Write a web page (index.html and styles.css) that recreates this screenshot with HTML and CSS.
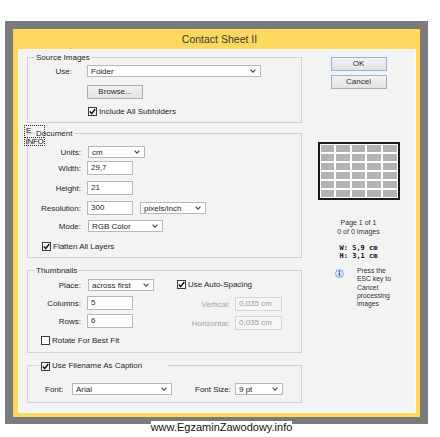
FILE: index.html
```html
<!DOCTYPE html>
<html>
<head>
<meta charset="utf-8">
<link rel="stylesheet" href="styles.css">
</head>
<body>
<div class="frame">
  <div class="dialog">
    <div class="titlebar">Contact Sheet II</div>
    <div class="panel">
      <div class="left">
        <section class="group g-source">
          <div class="ghead"><span class="gtitle">Source Images</span></div>
          <div class="gbody">
            <div class="row src-use">
              <span class="lbl lbl-src">Use:</span>
              <div class="select sel-folder"><span>Folder</span><svg class="chev" width="6" height="4" viewBox="0 0 6 4"><polyline points="0.6,0.6 3,3.2 5.4,0.6" fill="none" stroke="#444" stroke-width="1.1"/></svg></div>
            </div>
            <div class="row src-browse">
              <div class="btn btn-browse">Browse...</div>
            </div>
            <div class="row src-inc">
              <span class="cb cb-inc"><svg width="7" height="7" viewBox="0 0 7 7"><polyline points="0.8,3.6 2.7,5.6 6.3,1" fill="none" stroke="#111" stroke-width="1.5"/></svg></span>
              <span>Include All Subfolders</span>
            </div>
          </div>
        </section>

        <section class="group g-doc">
          <div class="ghead"><span class="gtitle">Document</span></div>
          <div class="gbody">
            <div class="row doc-units">
              <span class="lbl lbl-doc">Units:</span>
              <div class="select sel-units"><span>cm</span><svg class="chev" width="6" height="4" viewBox="0 0 6 4"><polyline points="0.6,0.6 3,3.2 5.4,0.6" fill="none" stroke="#444" stroke-width="1.1"/></svg></div>
            </div>
            <div class="row doc-width">
              <span class="lbl lbl-doc">Width:</span>
              <div class="input in-46">29,7</div>
            </div>
            <div class="row doc-height">
              <span class="lbl lbl-doc">Height:</span>
              <div class="input in-46">21</div>
            </div>
            <div class="row doc-res">
              <span class="lbl lbl-doc">Resolution:</span>
              <div class="input in-46">300</div>
              <div class="select sel-ppi"><span>pixels/inch</span><svg class="chev" width="6" height="4" viewBox="0 0 6 4"><polyline points="0.6,0.6 3,3.2 5.4,0.6" fill="none" stroke="#444" stroke-width="1.1"/></svg></div>
            </div>
            <div class="row doc-mode">
              <span class="lbl lbl-doc">Mode:</span>
              <div class="select sel-mode"><span>RGB Color</span><svg class="chev" width="6" height="4" viewBox="0 0 6 4"><polyline points="0.6,0.6 3,3.2 5.4,0.6" fill="none" stroke="#444" stroke-width="1.1"/></svg></div>
            </div>
            <div class="row doc-flat">
              <span class="cb cb-flat"><svg width="7" height="7" viewBox="0 0 7 7"><polyline points="0.8,3.6 2.7,5.6 6.3,1" fill="none" stroke="#111" stroke-width="1.5"/></svg></span>
              <span>Flatten All Layers</span>
            </div>
          </div>
        </section>

        <section class="group g-thumb">
          <div class="ghead"><span class="gtitle">Thumbnails</span></div>
          <div class="gbody thumb-cols">
            <div class="thumb-left">
              <div class="row th-place">
                <span class="lbl lbl-doc">Place:</span>
                <div class="select sel-place"><span>across first</span><svg class="chev" width="6" height="4" viewBox="0 0 6 4"><polyline points="0.6,0.6 3,3.2 5.4,0.6" fill="none" stroke="#444" stroke-width="1.1"/></svg></div>
              </div>
              <div class="row th-cols">
                <span class="lbl lbl-doc">Columns:</span>
                <div class="input in-46">5</div>
              </div>
              <div class="row th-rows">
                <span class="lbl lbl-doc">Rows:</span>
                <div class="input in-46">6</div>
              </div>
              <div class="row th-rot">
                <span class="cb cb-rot"></span>
                <span>Rotate For Best Fit</span>
              </div>
            </div>
            <div class="thumb-right">
              <div class="row th-auto">
                <span class="cb cb-auto"><svg width="7" height="7" viewBox="0 0 7 7"><polyline points="0.8,3.6 2.7,5.6 6.3,1" fill="none" stroke="#111" stroke-width="1.5"/></svg></span>
                <span>Use Auto-Spacing</span>
              </div>
              <div class="row th-vert">
                <span class="lbl lbl-sp disabled">Vertical:</span>
                <div class="input in-sp disabled">0,035 cm</div>
              </div>
              <div class="row th-hor">
                <span class="lbl lbl-sp disabled">Horizontal:</span>
                <div class="input in-sp disabled">0,035 cm</div>
              </div>
            </div>
          </div>
        </section>

        <section class="group g-cap">
          <div class="ghead ghead-cap"><span class="gtitle cap-title"><span class="cb cb-cap"><svg width="7" height="7" viewBox="0 0 7 7"><polyline points="0.8,3.6 2.7,5.6 6.3,1" fill="none" stroke="#111" stroke-width="1.5"/></svg></span><span>Use Filename As Caption</span></span></div>
          <div class="gbody">
            <div class="row cap-font">
              <span class="lbl lbl-font">Font:</span>
              <div class="select sel-font"><span>Arial</span><svg class="chev" width="6" height="4" viewBox="0 0 6 4"><polyline points="0.6,0.6 3,3.2 5.4,0.6" fill="none" stroke="#444" stroke-width="1.1"/></svg></div>
              <span class="lbl lbl-fsize">Font Size:</span>
              <div class="select sel-fsize"><span>9 pt</span><svg class="chev" width="6" height="4" viewBox="0 0 6 4"><polyline points="0.6,0.6 3,3.2 5.4,0.6" fill="none" stroke="#444" stroke-width="1.1"/></svg></div>
            </div>
          </div>
        </section>
      </div>

      <div class="right">
        <div class="btn btn-ok">OK</div>
        <div class="btn btn-cancel">Cancel</div>
        <div class="preview">
          <div class="cell"></div><div class="cell"></div><div class="cell"></div><div class="cell"></div><div class="cell"></div>
          <div class="cell"></div><div class="cell"></div><div class="cell"></div><div class="cell"></div><div class="cell"></div>
          <div class="cell"></div><div class="cell"></div><div class="cell"></div><div class="cell"></div><div class="cell"></div>
          <div class="cell"></div><div class="cell"></div><div class="cell"></div><div class="cell"></div><div class="cell"></div>
          <div class="cell"></div><div class="cell"></div><div class="cell"></div><div class="cell"></div><div class="cell"></div>
          <div class="cell"></div><div class="cell"></div><div class="cell"></div><div class="cell"></div><div class="cell"></div>
        </div>
        <div class="pageinfo">
          <div>Page 1 of 1</div>
          <div>0 of 0 Images</div>
        </div>
        <div class="dims">
          <div>W: 5,9 cm</div>
          <div>H: 3,1 cm</div>
        </div>
        <div class="esc">
          <svg class="info-icon" width="9" height="9" viewBox="0 0 9 9"><circle cx="4.5" cy="4.5" r="4" fill="#d9e9fa" stroke="#6d9fd8" stroke-width="0.8"/><circle cx="4.5" cy="2.4" r="0.9" fill="#2c6cc0"/><rect x="3.8" y="3.7" width="1.4" height="3.4" fill="#2c6cc0"/></svg>
          <div class="esc-text">Press the<br>ESC key to<br>Cancel<br>processing<br>images</div>
        </div>
      </div>

      <div class="focus-mark">
        <div class="focus-top">E</div>
        <div class="focus-bot">INFO</div>
      </div>
    </div>
  </div>
</div>
<div class="watermark"><span>www.EgzaminZawodowy.info</span></div>
</body>
</html>
```

FILE: styles.css
```css
* { box-sizing: border-box; }
html, body { margin: 0; padding: 0; background: #fff; }
body {
  width: 440px; height: 437px; overflow: hidden;
  font-family: "Liberation Sans", Arial, sans-serif;
  font-size: 8px; color: #262626;
}
.frame {
  margin: 21px 0 0 5px;
  width: 423px; height: 403px;
  background: #7b7b7b;
  padding: 8px 8px 7px 8px;
}
.dialog {
  width: 407px; height: 388px;
  background: #fdd85e;
  display: flex; flex-direction: column;
}
.titlebar {
  height: 21px; line-height: 21px;
  text-align: center; font-size: 10.5px; color: #3a3a3a;
  padding-left: 6px;
}
.panel {
  margin: 0 5px 0 6px;
  height: 362px;
  background: #f3f3f3;
  box-shadow: 0 0 0 1px #fafafa;
  display: flex;
  position: relative;
}
.left { width: 283px; padding: 3px 0 0 8px; }
.right { flex: 1; display: flex; flex-direction: column; align-items: center; }

/* group boxes */
.group { width: 275px; }
.ghead { display: flex; height: 10px; }
.ghead::before {
  content: ""; flex: none; width: 7px; height: 5px; align-self: flex-end;
  border-left: 1px solid #d3d3d3; border-top: 1px solid #d3d3d3;
}
.ghead::after {
  content: ""; flex: 1; height: 5px; align-self: flex-end;
  border-right: 1px solid #d3d3d3; border-top: 1px solid #d3d3d3;
}
.gtitle { align-self: center; padding: 0 2px 0 1px; line-height: 8px; white-space: nowrap; }
.gbody {
  border: 1px solid #d3d3d3; border-top: none;
}

.row { display: flex; align-items: center; height: 14px; }
.lbl { flex: none; text-align: right; white-space: nowrap; }
.disabled { color: #a4a4a4; }

.select {
  flex: none;
  height: 12px;
  border: 1px solid #b8b8b8;
  background: #fff;
  display: flex; align-items: center; justify-content: space-between;
  padding: 0 4px 0 3px;
  white-space: nowrap;
}
.chev { flex: none; }
.input {
  flex: none;
  height: 14px; line-height: 12px;
  border: 1px solid #b8b8b8;
  background: #fff;
  padding: 0 3px;
  white-space: nowrap;
}
.input.disabled { background: #f6f6f6; border-color: #d4d4d4; color: #a0a0a0; }
.btn {
  flex: none;
  height: 14px; line-height: 12px;
  text-align: center;
  border: 1px solid #adadad;
  background: linear-gradient(#f2f2f2, #e3e3e3);
  color: #2a2a2a;
}
.cb {
  flex: none;
  display: inline-flex; align-items: center; justify-content: center;
  width: 9px; height: 9px;
  border: 1px solid #3a3a3a;
  background: #fff;
  margin-right: 2px;
}

/* Source Images */
.g-source .gbody { padding: 1px 0 4px; }
.lbl-src { width: 44px; margin-right: 15px; }
.sel-folder { width: 174px; }
.src-browse { margin-top: 7px; }
.btn-browse { margin-left: 59px; width: 56px; }
.src-inc { margin-top: 5px; }
.cb-inc { margin-left: 60px; }

/* Document */
.g-doc { margin-top: 6px; }
.g-doc .gbody { padding: 6px 0 4px; }
.lbl-doc { width: 53px; margin-right: 6px; }
.sel-units { width: 57px; margin-left: 1px; }
.in-46 { width: 46px; }
.doc-width { margin-top: 2px; }
.doc-height { margin-top: 6px; }
.doc-res { margin-top: 6px; }
.sel-ppi { width: 66px; margin-left: 7px; }
.doc-mode { margin-top: 4px; }
.sel-mode { width: 75px; margin-left: 1px; }
.doc-flat { margin-top: 6px; }
.cb-flat { margin-left: 14px; }

/* Thumbnails */
.g-thumb { margin-top: 8px; }
.thumb-cols { display: flex; padding-bottom: 5px; }
.thumb-left { width: 142px; padding-top: 2px; }
.thumb-right { flex: 1; padding-top: 1px; }
.th-cols { margin-top: 4px; }
.th-rows { margin-top: 4px; }
.th-rot { margin-top: 5px; }
.sel-place { width: 66px; margin-left: 1px; }
.cb-rot { margin-left: 13px; }
.cb-auto { margin-left: 7px; }
.th-vert { margin-top: 6px; }
.th-hor { margin-top: 5px; }
.lbl-sp { width: 60px; margin-right: 5px; }
.in-sp { width: 47px; }

/* Caption */
.g-cap { margin-top: 8px; }
.ghead-cap::before { width: 11px; }
.cap-title { display: flex; align-items: center; padding: 0 26px 0 2px; }
.g-cap .gbody { padding: 11px 0 6px; }
.lbl-font { width: 22px; margin-left: 17px; margin-right: 5px; text-align: left; }
.sel-font { width: 100px; }
.lbl-fsize { width: 36px; margin-left: 23px; margin-right: 4px; text-align: left; }
.sel-fsize { width: 48px; }

/* Right column */
.btn-ok { margin-top: 7px; width: 56px; border-color: #83b6e3; }
.btn-cancel { margin-top: 4px; width: 56px; }
.preview {
  margin-top: 53px;
  width: 82px; height: 58px;
  border: 2px solid #1c1c1c;
  background: #fff;
  padding: 1px;
  display: grid;
  grid-template-columns: repeat(5, 1fr);
  grid-template-rows: repeat(6, 1fr);
  gap: 2px;
}
.cell { background: #b3b3b3; }
.pageinfo {
  margin-top: 18px;
  font-size: 7px; line-height: 9px;
  text-align: center; color: #333;
}
.dims {
  margin-top: 8px;
  font-family: "DejaVu Sans Mono", "Liberation Mono", monospace;
  font-weight: bold; font-size: 7px; line-height: 8px;
  color: #111;
}
.esc {
  align-self: flex-start;
  margin-top: 7px; margin-left: 33px;
  display: flex; align-items: flex-start;
}
.info-icon { margin-top: 2px; margin-right: 13px; flex: none; }
.esc-text { font-size: 6.8px; line-height: 8.3px; color: #333; }

/* focus mark overlay */
.focus-mark {
  position: absolute; left: 5px; top: 75px;
  width: 21px; height: 21px;
  border: 1px dotted #333;
  display: flex; flex-direction: column;
}
.focus-top {
  flex: none;
  height: 12px; border-bottom: 1px dotted #333;
  font-size: 8px; line-height: 9px; padding-left: 1px; color: #222;
}
.focus-bot {
  font-size: 8px; line-height: 7px; letter-spacing: -0.3px;
  text-align: center; color: #222;
}

.watermark {
  margin-top: -2px;
  height: 13px;
  font-family: "Liberation Sans", Arial, sans-serif;
  font-size: 11px; line-height: 11px;
  text-align: center; padding-left: 3px;
  color: #111;
}
.watermark span { background: #fff; }
```
